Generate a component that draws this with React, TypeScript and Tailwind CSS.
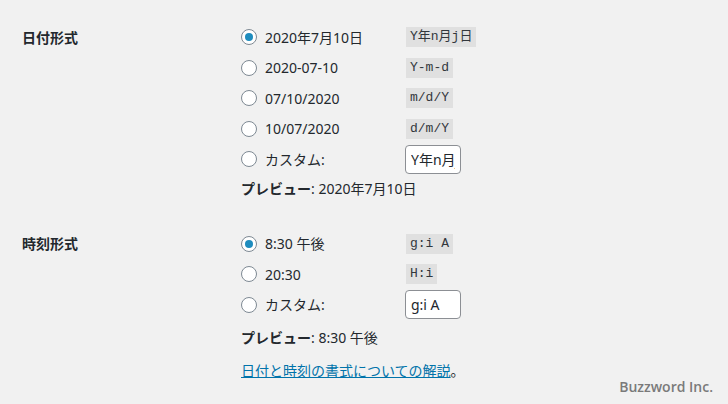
import React from "react";

const font = { fontFamily: '"Noto Sans", "Noto Sans CJK JP", sans-serif' };

function Radio({ checked }: { checked?: boolean }) {
  return (
    <span className="w-4 h-4 rounded-full border border-[#7e8993] bg-white flex items-center justify-center shrink-0">
      {checked && <span className="w-2 h-2 rounded-full bg-[#1e8cbe]" />}
    </span>
  );
}

function Code({ children }: { children: React.ReactNode }) {
  return (
    <span
      className="h-5 px-1 bg-[#e0e0e0] text-[13px] leading-5 text-[#32373c] flex items-center"
      style={{ fontFamily: '"Liberation Mono", "Noto Sans CJK JP", monospace' }}
    >
      {children}
    </span>
  );
}

function Row({ label, checked, code }: { label: string; checked?: boolean; code: string }) {
  return (
    <div className="h-[30.5px] flex items-center">
      <Radio checked={checked} />
      <span className="ml-2 w-[141px] text-[14px] text-[#23282d]">{label}</span>
      <Code>{code}</Code>
    </div>
  );
}

function CustomRow({ value }: { value: string }) {
  return (
    <div className="h-[30.5px] flex items-center">
      <Radio />
      <span className="ml-2 w-[140px] text-[14px] text-[#23282d]">カスタム:</span>
      <input
        readOnly
        value={value}
        className="w-[56px] h-[29px] border border-[#8c8f94] rounded bg-white text-[14px] text-[#23282d] px-[5px] outline-none"
        style={font}
      />
    </div>
  );
}

export default function App() {
  return (
    <div className="w-[728px] h-[404px] bg-[#f1f1f1] relative overflow-hidden" style={font}>
      <div className="pl-[22px]">
        <div className="flex pt-[22px]">
          <div className="w-[219px] h-[30.5px] flex items-center text-[14px] font-bold text-[#23282d]">日付形式</div>
          <div className="flex flex-col">
            <Row label="2020年7月10日" checked code="Y年n月j日" />
            <Row label="2020-07-10" code="Y-m-d" />
            <Row label="07/10/2020" code="m/d/Y" />
            <Row label="10/07/2020" code="d/m/Y" />
            <CustomRow value="Y年n月j日" />
            <div className="h-5 mt-[4px] flex items-center text-[14px] text-[#23282d]">
              <span className="font-bold">プレビュー</span>
              <span>: 2020年7月10日</span>
            </div>
          </div>
        </div>
        <div className="flex mt-[30px]">
          <div className="w-[219px] h-[30.5px] flex items-center text-[14px] font-bold text-[#23282d]">時刻形式</div>
          <div className="flex flex-col">
            <Row label="8:30 午後" checked code="g:i A" />
            <Row label="20:30" code="H:i" />
            <CustomRow value="g:i A" />
            <div className="h-5 mt-[7px] flex items-center text-[14px] text-[#23282d]">
              <span className="font-bold">プレビュー</span>
              <span>: 8:30 午後</span>
            </div>
            <div className="h-5 mt-[13px] flex items-center text-[14px] text-[#23282d]">
              <a className="text-[#0073aa] underline">日付と時刻の書式についての解説</a>
              <span>。</span>
            </div>
          </div>
        </div>
      </div>
      <div className="absolute right-[15px] bottom-[7px] text-[14px] font-semibold text-[#7a7a7a]" style={{ fontFamily: '"Open Sans", sans-serif' }}>
        Buzzword Inc.
      </div>
    </div>
  );
}
